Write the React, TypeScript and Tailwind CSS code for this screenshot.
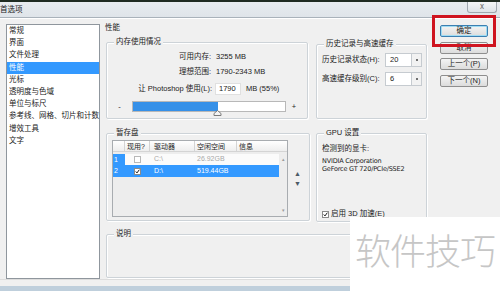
import React from "react";

const Group = ({
  label,
  className,
  children,
}: {
  label: string;
  className: string;
  children?: React.ReactNode;
}) => (
  <div
    className={
      "relative border border-[#cdd3d8] rounded-[2px] shadow-[inset_1px_1px_0_#ffffff,1px_1px_0_#ffffff] " +
      className
    }
  >
    <span className="absolute left-[7px] top-[-6px] px-[2px] bg-[#f0f0f0] text-[7.5px] leading-[10px] whitespace-nowrap">
      {label}
    </span>
    {children}
  </div>
);

const Check = ({ checked, dim }: { checked?: boolean; dim?: boolean }) => (
  <div
    className={
      "w-[7px] h-[7px] border bg-white flex items-center justify-center " +
      (dim ? "border-[#b8b8b8]" : "border-[#8a8a8a]")
    }
  >
    {checked && (
      <svg width="7" height="7" viewBox="0 0 7 7">
        <path d="M1 3.5 L2.8 5.5 L6 1" fill="none" stroke="#1a1a1a" strokeWidth="1.4" />
      </svg>
    )}
  </div>
);

const Btn = ({ label, def, className }: { label: string; def?: boolean; className: string }) => (
  <div
    className={
      "w-[48px] h-[12px] rounded-[2px] border flex items-center justify-center text-[7.5px] leading-[10px] whitespace-nowrap bg-gradient-to-b from-[#f4f4f4] to-[#dcdcdc] " +
      (def ? "border-[#3c7fb1] shadow-[inset_0_0_0_1px_#9fdcf4] " : "border-[#8e8e8e] ") +
      className
    }
  >
    {label}
  </div>
);

const Spin = ({ value }: { value: string }) => (
  <div className="flex h-[14px]">
    <div className="w-[27px] h-full bg-white border border-[#c6cbd0] flex items-center pl-[4px] text-[7.5px]">
      {value}
    </div>
    <div className="w-[10px] h-full bg-[#f2f2f2] border border-l-0 border-[#c6cbd0] flex items-center justify-center">
      <div className="w-[2px] h-[2px] bg-[#707070]" />
    </div>
  </div>
);

export default function App() {
  const items = [
    "常规",
    "界面",
    "文件处理",
    "性能",
    "光标",
    "透明度与色域",
    "单位与标尺",
    "参考线、网格、切片和计数",
    "增效工具",
    "文字",
  ];
  return (
    <div className="w-[500px] h-[291px] overflow-hidden relative bg-[#f0f0f0] text-[#222222] font-['Liberation_Sans','Noto_Sans_CJK_SC',sans-serif]">
      {/* title bar */}
      <div className="h-[18px] bg-gradient-to-b from-[#e9edf1] to-[#dfe4e9] border-b border-[#a9b2ba] shadow-[0_1px_0_#ffffff]">
        <div className="h-[2px] bg-[#1f2b22]" />
        <div className="flex items-start justify-between pr-[3px]">
          <span className="text-[7.5px] leading-[10px] mt-[3px] ml-0">首选项</span>
          <div className="w-[30px] h-[11px] border border-t-0 border-[#a0a8b0] rounded-b-[3px] bg-gradient-to-b from-[#f4f6f8] to-[#dde3e8] flex items-center justify-center text-[8px] leading-[8px] text-[#6a6a6a]">
            ⅹ
          </div>
        </div>
      </div>

      {/* body */}
      <div className="flex pl-[6px] pt-[6px]">
        {/* list */}
        <div className="w-[94px] h-[255px] bg-white border border-[#8f969d]">
          {items.map((t) => (
            <div
              key={t}
              className={
                "h-[12.2px] leading-[12px] pl-[2px] text-[7.5px] whitespace-nowrap " +
                (t === "性能" ? "bg-[#3399ff] text-white" : "")
              }
            >
              {t}
            </div>
          ))}
        </div>

        {/* main panel */}
        <div className="ml-[4px] w-[324px]">
          <div className="h-[8px] leading-[8px] text-[7.5px] pl-[1px]">性能</div>

          {/* row 1 */}
          <div className="flex items-start">
            <Group label="内存使用情况" className="ml-[2px] mt-[10px] w-[202px] h-[77px]">
              <div className="flex flex-col text-[7.5px]">
                <div className="flex h-[10px] mt-[9px] items-center">
                  <div className="w-[104px] text-right">可用内存:</div>
                  <div className="ml-[5px]">3255 MB</div>
                </div>
                <div className="flex h-[10px] mt-[5px] items-center">
                  <div className="w-[104px] text-right">理想范围:</div>
                  <div className="ml-[5px]">1790-2343 MB</div>
                </div>
                <div className="flex h-[12px] mt-[6px] items-center">
                  <div className="w-[105px] text-right">让 Photoshop 使用(L):</div>
                  <div className="ml-[3px] w-[26px] h-[12px] bg-white border border-[#e0e0e0] flex items-center pl-[3px]">
                    1790
                  </div>
                  <div className="ml-[5px]">MB (55%)</div>
                </div>
                <div className="flex h-[11px] mt-[6px] items-center">
                  <div className="w-[25px] text-center leading-[8px]">-</div>
                  <div className="relative w-[154px] h-[11px] bg-white border border-[#b8b8b8]">
                    <div className="w-[85px] h-full bg-[#3590e8]" />
                    <svg className="absolute left-[80px] top-[8px]" width="9" height="6" viewBox="0 0 9 6">
                      <path d="M4.5 0.5 L8 3.5 L8 5.5 L1 5.5 L1 3.5 Z" fill="#f4f4f4" stroke="#7a7a7a" strokeWidth="1" />
                    </svg>
                  </div>
                  <div className="w-[16px] text-center leading-[8px]">+</div>
                </div>
              </div>
            </Group>

            <Group label="历史记录与高速缓存" className="ml-[8px] mt-[12px] w-[111px] h-[75px]">
              <div className="flex flex-col text-[7.5px]">
                <div className="flex items-center mt-[8px] pl-[5px]">
                  <div className="w-[63px] whitespace-nowrap">历史记录状态(H):</div>
                  <Spin value="20" />
                </div>
                <div className="flex items-center mt-[5px] pl-[5px]">
                  <div className="w-[63px] whitespace-nowrap">高速缓存级别(C):</div>
                  <Spin value="6" />
                </div>
              </div>
            </Group>
          </div>

          {/* row 2 */}
          <div className="flex items-start mt-[14px]">
            <Group label="暂存盘" className="ml-[2px] w-[204px] h-[88px]">
              <div className="flex items-start">
                <div className="ml-[5px] mt-[6px] w-[176px] h-[77px] border border-[#a8acb0] bg-[#ededed] text-[7px] flex flex-col">
                  <div className="flex h-[11px] items-center bg-gradient-to-b from-[#ffffff] to-[#eeeeee] border-b border-[#d4d4d4]">
                    <div className="w-[12px] h-full border-r border-[#d4d4d4]" />
                    <div className="w-[25px] h-full border-r border-[#d4d4d4] pl-[2px] leading-[11px]">现用?</div>
                    <div className="w-[45px] h-full border-r border-[#d4d4d4] pl-[4px] leading-[11px]">驱动器</div>
                    <div className="w-[42px] h-full border-r border-[#d4d4d4] pl-[2px] leading-[11px]">空闲空间</div>
                    <div className="pl-[2px] leading-[11px]">信息</div>
                  </div>
                  <div className="flex flex-1 mt-[2px]">
                    <div className="flex-1 flex flex-col">
                      <div className="flex h-[11px] items-center bg-[#fbfbfb] text-[#a8a8a8]">
                        <div className="w-[12px] h-full bg-[#3399ff] text-white pl-[1px] leading-[11px]">1</div>
                        <div className="w-[25px] flex justify-center">
                          <Check dim />
                        </div>
                        <div className="w-[45px] pl-[4px]">C:\</div>
                        <div className="w-[42px] pl-[2px]">26.92GB</div>
                      </div>
                      <div className="flex h-[12px] items-center bg-[#3399ff] text-white">
                        <div className="w-[12px] pl-[1px]">2</div>
                        <div className="w-[25px] flex justify-center">
                          <Check checked />
                        </div>
                        <div className="w-[45px] pl-[4px]">D:\</div>
                        <div className="w-[42px] pl-[2px]">519.44GB</div>
                      </div>
                    </div>
                    <div className="w-[8px] flex flex-col items-center justify-between py-[3px] text-[5px] leading-[5px] text-[#9a9a9a]">
                      <span>▴</span>
                      <span>▾</span>
                    </div>
                  </div>
                </div>
                <div className="ml-[6px] mt-[35px] flex flex-col items-center text-[7px] leading-[10px] text-[#4c5a66]">
                  <span>▲</span>
                  <span>▼</span>
                </div>
              </div>
            </Group>

            <Group label="GPU 设置" className="ml-[6px] w-[111px] h-[89px]">
              <div className="flex flex-col pl-[5px]">
                <div className="mt-[10px] h-[10px] leading-[10px] text-[7.5px]">检测到的显卡:</div>
                <div className="mt-[3px] text-[6.5px] leading-[8px] font-['DejaVu_Sans','Liberation_Sans',sans-serif] tracking-[-0.2px]">
                  NVIDIA Corporation
                </div>
                <div className="text-[6.5px] leading-[8px] font-['DejaVu_Sans','Liberation_Sans',sans-serif] tracking-[-0.2px]">
                  GeForce GT 720/PCIe/SSE2
                </div>
                <div className="mt-[36px] flex items-center h-[10px] text-[7.5px]">
                  <Check checked />
                  <span className="ml-[2px]">启用 3D 加速(E)</span>
                </div>
              </div>
            </Group>
          </div>

          {/* row 3 */}
          <Group label="说明" className="ml-[2px] mt-[12px] w-[321px] h-[44px]" />
        </div>

        {/* buttons */}
        <div className="ml-[12px] flex flex-col">
          <Btn label="确定" def className="mt-[1px]" />
          <Btn label="取消" className="mt-[5px]" />
          <Btn label="上一个(P)" className="mt-[4px]" />
          <Btn label="下一个(N)" className="mt-[5px]" />
        </div>
      </div>

      {/* bottom frame */}
      <div className="h-[7px] border-t border-[#dcdcdc]" />
      <div className="h-[5px] bg-[#bfcfdc]" />

      {/* red highlight */}
      <div className="absolute left-[432px] top-[15px] w-[64px] h-[32px] border-[3px] border-[#cf1420]" />

      {/* watermark */}
      <div className="absolute left-[350px] top-[217px] w-[150px] h-[74px] bg-white flex items-start justify-center pt-[12px]">
        <span className="text-[36px] leading-[40px] text-[#c6c6c6] font-['Noto_Sans_CJK_SC',sans-serif] font-light tracking-[-1px]">
          软件技巧
        </span>
      </div>
    </div>
  );
}
